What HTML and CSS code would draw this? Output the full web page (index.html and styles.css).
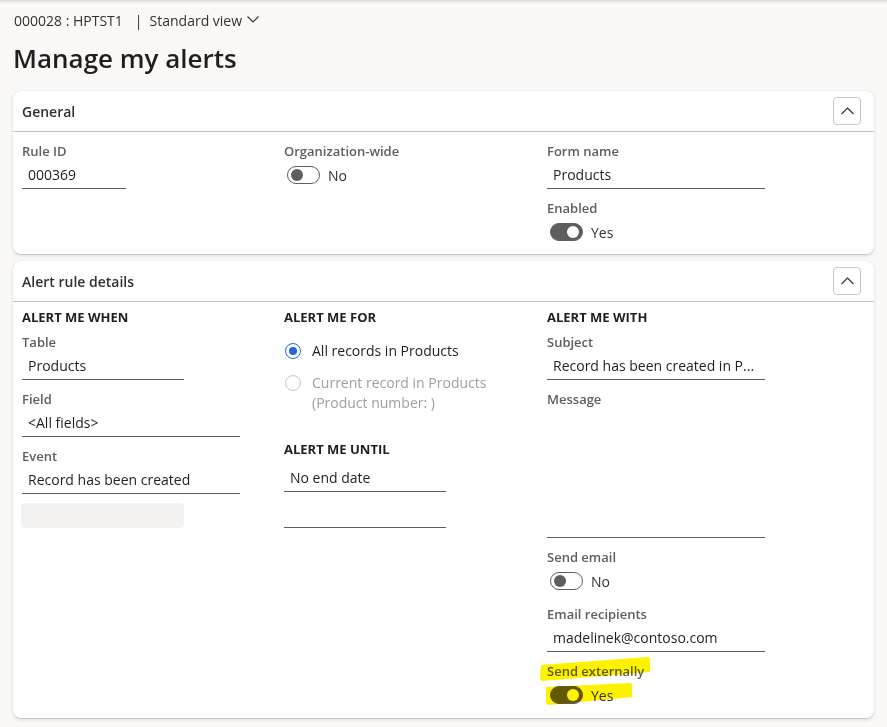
FILE: index.html
```html
<!DOCTYPE html>
<html lang="en">
<head>
<meta charset="utf-8">
<title>Manage my alerts</title>
<link rel="stylesheet" href="styles.css">
</head>
<body>
<div class="page">
  <div class="crumb">
    <span>000028 : HPTST1</span>
    <span class="sep">|</span>
    <span class="view">Standard view</span>
    <svg class="chev-down" width="12" height="7" viewBox="0 0 12 7"><polyline points="0.5,0.5 6,6 11.5,0.5" fill="none" stroke="#323130" stroke-width="1.1"/></svg>
  </div>
  <h1 class="title">Manage my alerts</h1>

  <section class="card">
    <header class="card-head">
      <h2 class="card-title">General</h2>
      <button class="collapse" type="button" aria-label="Collapse">
        <svg width="13" height="8" viewBox="0 0 13 8"><polyline points="0.5,7 6.5,1 12.5,7" fill="none" stroke="#323130" stroke-width="1.1"/></svg>
      </button>
    </header>
    <div class="card-body">
      <div class="col">
        <div class="field">
          <div class="lbl">Rule ID</div>
          <div class="input w-rule">000369</div>
        </div>
      </div>
      <div class="col">
        <div class="field">
          <div class="lbl">Organization-wide</div>
          <div class="toggle-row"><span class="toggle"></span><span>No</span></div>
        </div>
      </div>
      <div class="col">
        <div class="field">
          <div class="lbl">Form name</div>
          <div class="input w-wide">Products</div>
        </div>
        <div class="field">
          <div class="lbl">Enabled</div>
          <div class="toggle-row"><span class="toggle on"></span><span>Yes</span></div>
        </div>
      </div>
    </div>
  </section>

  <section class="card">
    <header class="card-head">
      <h2 class="card-title">Alert rule details</h2>
      <button class="collapse" type="button" aria-label="Collapse">
        <svg width="13" height="8" viewBox="0 0 13 8"><polyline points="0.5,7 6.5,1 12.5,7" fill="none" stroke="#323130" stroke-width="1.1"/></svg>
      </button>
    </header>
    <div class="card-body tight">
      <div class="col">
        <div class="sect">Alert me when</div>
        <div class="field">
          <div class="lbl">Table</div>
          <div class="input w-mid">Products</div>
        </div>
        <div class="field">
          <div class="lbl">Field</div>
          <div class="input w-wide">&lt;All fields&gt;</div>
        </div>
        <div class="field">
          <div class="lbl">Event</div>
          <div class="input w-wide">Record has been created</div>
        </div>
        <div class="blank-box"></div>
      </div>
      <div class="col">
        <div class="sect">Alert me for</div>
        <div class="radio-row first">
          <span class="radio checked"></span>
          <span>All records in Products</span>
        </div>
        <div class="radio-row disabled">
          <span class="radio"></span>
          <span>Current record in Products<br>(Product number: )</span>
        </div>
        <div class="sect until">Alert me until</div>
        <div class="input w-mid">No end date</div>
        <div class="input w-mid gap8"></div>
      </div>
      <div class="col">
        <div class="sect">Alert me with</div>
        <div class="field">
          <div class="lbl">Subject</div>
          <div class="input w-wide">Record has been created in P...</div>
        </div>
        <div class="field">
          <div class="lbl">Message</div>
          <div class="input w-wide textarea"></div>
        </div>
        <div class="field">
          <div class="lbl">Send email</div>
          <div class="toggle-row"><span class="toggle"></span><span>No</span></div>
        </div>
        <div class="field">
          <div class="lbl">Email recipients</div>
          <div class="input w-wide">madelinek@contoso.com</div>
        </div>
        <div class="field">
          <div class="lbl">Send externally</div>
          <div class="toggle-row"><span class="toggle on"></span><span>Yes</span></div>
        </div>
      </div>
    </div>
  </section>
</div>

<svg class="marks" width="887" height="727" viewBox="0 0 887 727" aria-hidden="true">
  <polygon points="541,665 647,657 650,658 650,672 542,681 540,679" fill="#fff200"/>
  <polygon points="546,687 630,683 632,684 632,697 548,705 546,703" fill="#fff200"/>
</svg>
</body>
</html>
```

FILE: styles.css
```css
* { box-sizing: border-box; }

body {
  margin: 0;
  position: relative;
  min-height: 727px;
  background: #faf9f8 linear-gradient(#d9d7d5, #f1efed 2px, #faf9f8 5px) no-repeat;
  font-family: "Open Sans", "Noto Sans", "Liberation Sans", sans-serif;
  color: #201f1e;
}

.page {
  padding: 11px 13px 0;
}

.crumb {
  display: flex;
  align-items: center;
  height: 20px;
  padding-left: 1px;
  font-size: 14px;
  line-height: 20px;
  color: #323130;
}

.sep {
  margin: 0 7px 0 12px;
}

.chev-down {
  margin-left: 5px;
  margin-top: -3px;
}

.title {
  margin: 9px 0 15px;
  height: 36px;
  font-size: 26px;
  line-height: 36px;
  font-weight: 600;
  color: #201f1e;
}

.card {
  background: #fff;
  border-radius: 8px;
  box-shadow: 0 1.6px 3.6px rgba(0, 0, 0, 0.12), 0 0.3px 0.9px rgba(0, 0, 0, 0.1);
  margin-bottom: 7px;
}

.card-head {
  display: flex;
  align-items: center;
  justify-content: space-between;
  height: 41px;
  padding: 0 13px 0 9px;
  border-bottom: 1px solid #c4c2c0;
}

.card-title {
  margin: 0;
  font-size: 14px;
  font-weight: 600;
  color: #323130;
}

.collapse {
  display: flex;
  align-items: center;
  justify-content: center;
  width: 28px;
  height: 28px;
  padding: 0;
  background: #fff;
  border: 1px solid #c8c6c4;
  border-radius: 4px;
}

.card-body {
  display: grid;
  grid-template-columns: 262px 263px 1fr;
  padding: 9px 9px 8px;
}

.card-body.tight {
  padding-top: 5px;
  padding-bottom: 9px;
}

.field + .field {
  margin-top: 9px;
}

.lbl {
  height: 20px;
  font-size: 13px;
  line-height: 20px;
  font-weight: 600;
  color: #605e5c;
}

.input {
  height: 28px;
  padding: 0 6px;
  border-bottom: 1px solid #605e5c;
  font-size: 14px;
  line-height: 28px;
  color: #201f1e;
  white-space: nowrap;
  overflow: hidden;
}

.w-rule { width: 104px; }
.w-mid { width: 162px; }
.w-wide { width: 218px; }

.input.textarea {
  height: 129px;
}

.input.gap8 {
  margin-top: 8px;
}

.toggle-row {
  display: flex;
  align-items: center;
  gap: 8px;
  height: 28px;
  font-size: 14px;
  color: #323130;
}

.toggle {
  position: relative;
  width: 33px;
  height: 18px;
  margin-left: 3px;
  border: 1px solid #605e5c;
  border-radius: 9px;
  background: #fff;
}

.toggle::after {
  content: "";
  position: absolute;
  top: 2px;
  left: 3px;
  width: 12px;
  height: 12px;
  border-radius: 50%;
  background: #605e5c;
}

.toggle.on {
  background: #605e5c;
}

.toggle.on::after {
  left: auto;
  right: 3px;
  background: #fff;
}

.sect {
  height: 20px;
  margin-bottom: 5px;
  font-size: 13px;
  line-height: 20px;
  font-weight: 700;
  text-transform: uppercase;
  color: #201f1e;
}

.sect.until {
  margin-top: 26px;
}

.radio-row {
  display: flex;
  align-items: flex-start;
  gap: 11px;
  margin-top: 12px;
  font-size: 14px;
  line-height: 20px;
  color: #201f1e;
}

.radio-row.first {
  margin-top: 14px;
}

.radio-row.disabled {
  color: #a19f9d;
}

.radio {
  position: relative;
  flex: none;
  width: 16px;
  height: 16px;
  margin: 2px 0 0 1px;
  border: 1px solid #c8c6c4;
  border-radius: 50%;
  background: #fff;
}

.radio.checked {
  border-color: #2266e3;
}

.radio.checked::after {
  content: "";
  position: absolute;
  top: 3px;
  left: 3px;
  width: 8px;
  height: 8px;
  border-radius: 50%;
  background: #2266e3;
}

.blank-box {
  width: 163px;
  height: 25px;
  margin: 9px 0 0 -1px;
  border-radius: 4px;
  background: #f3f2f1;
}

.marks {
  position: absolute;
  top: 0;
  left: 0;
  pointer-events: none;
  mix-blend-mode: multiply;
}
```
